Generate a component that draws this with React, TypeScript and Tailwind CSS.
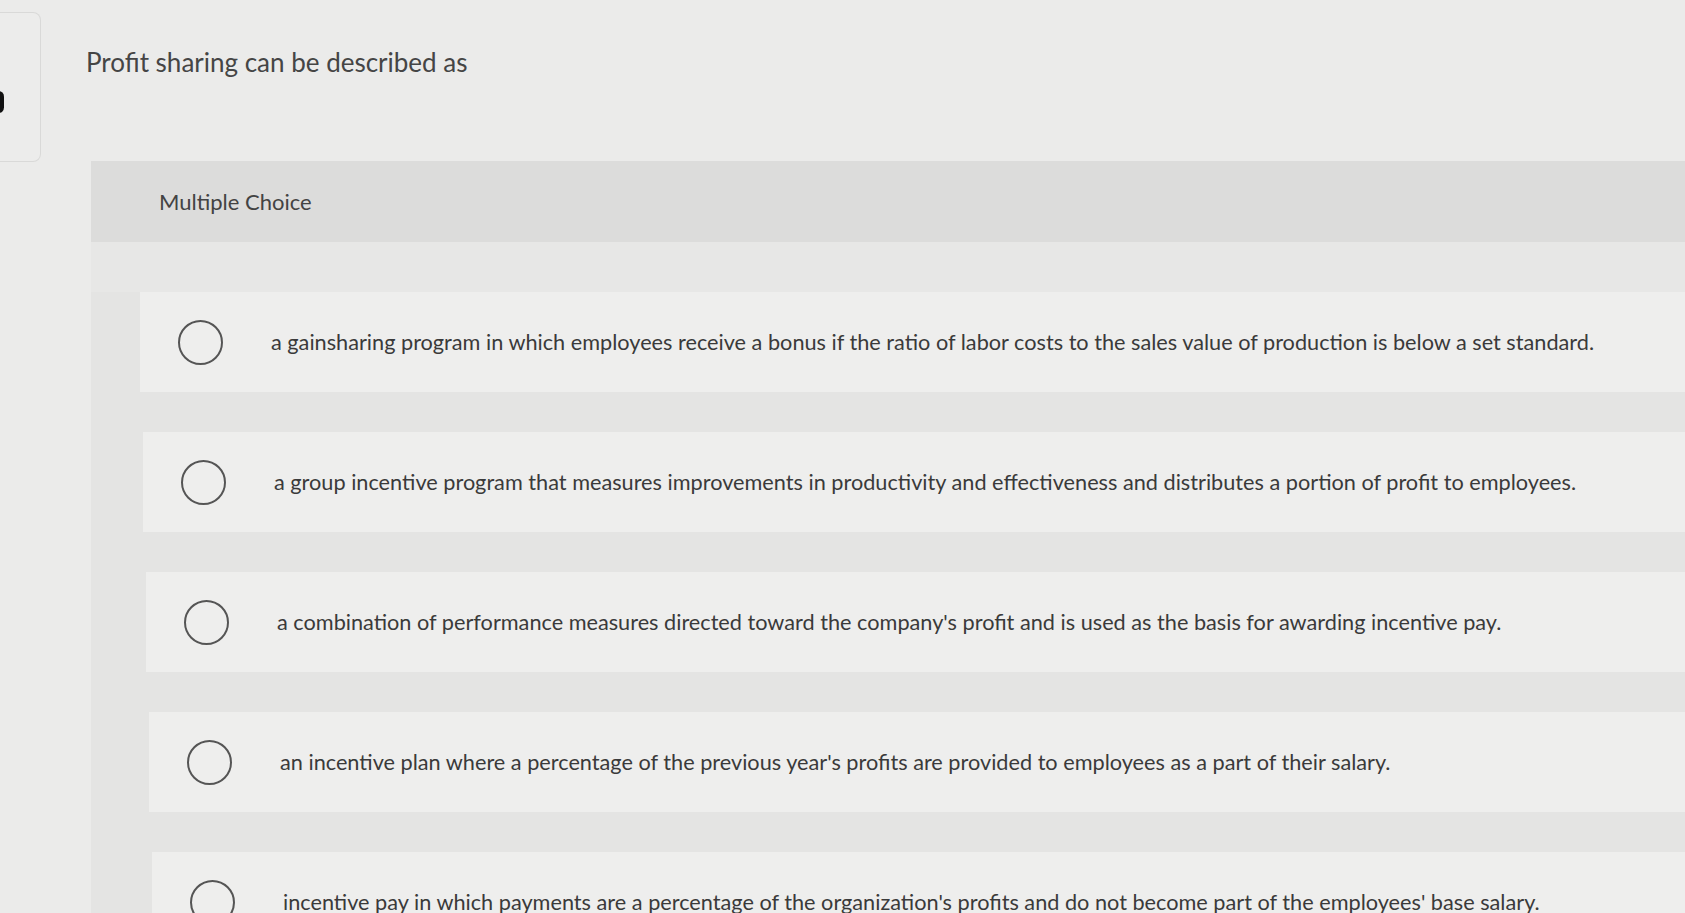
const OPTIONS = [
  'a gainsharing program in which employees receive a bonus if the ratio of labor costs to the sales value of production is below a set standard.',
  'a group incentive program that measures improvements in productivity and effectiveness and distributes a portion of profit to employees.',
  "a combination of performance measures directed toward the company's profit and is used as the basis for awarding incentive pay.",
  "an incentive plan where a percentage of the previous year's profits are provided to employees as a part of their salary.",
  "incentive pay in which payments are a percentage of the organization's profits and do not become part of the employees' base salary.",
];

// the photo is taken at a slight angle, so each row sits a little further right
const ROW_SHIFT = ['ml-0', 'ml-[3px]', 'ml-[6px]', 'ml-[9px]', 'ml-[12px]'];

function Choice({ text, shift }: { text: string; shift: string }) {
  return (
    <div className={`flex h-[100px] shrink-0 items-center bg-[#eeeeed] pl-[38px] ${shift}`}>
      <span className="h-[45px] w-[45px] shrink-0 rounded-full border-2 border-[#555555]" />
      <span className="ml-[48px] whitespace-nowrap text-[21.7px] text-[#3a3a3a]">{text}</span>
    </div>
  );
}

export default function App() {
  return (
    <div className="h-[913px] w-[1685px] overflow-hidden bg-[#ebebea] font-['Lato','Liberation_Sans',sans-serif]">
      <div className="flex h-[161px]">
        <div className="relative mt-[12px] h-[150px] w-[41px] shrink-0 rounded-r-lg border border-l-0 border-[#d9d9d8] bg-[#ececeb]">
          <span className="absolute top-[78px] -left-[7px] h-[22px] w-[11px] rounded-full bg-[#111111]" />
        </div>
        <h1 className="ml-[45px] mt-[46px] text-[26px] leading-[32px] text-[#454545]">
          Profit sharing can be described as
        </h1>
      </div>

      <div className="ml-[91px] bg-[#e4e4e3]">
        <div className="flex h-[81px] items-center bg-[#dcdcdb] pl-[68px] text-[22px] text-[#434343]">
          Multiple Choice
        </div>
        <div className="h-[50px] bg-[#e7e7e6]" />
        <div className="flex flex-col gap-[40px] pl-[49px]">
          {OPTIONS.map((text, i) => (
            <Choice key={i} text={text} shift={ROW_SHIFT[i]} />
          ))}
        </div>
      </div>
    </div>
  );
}
